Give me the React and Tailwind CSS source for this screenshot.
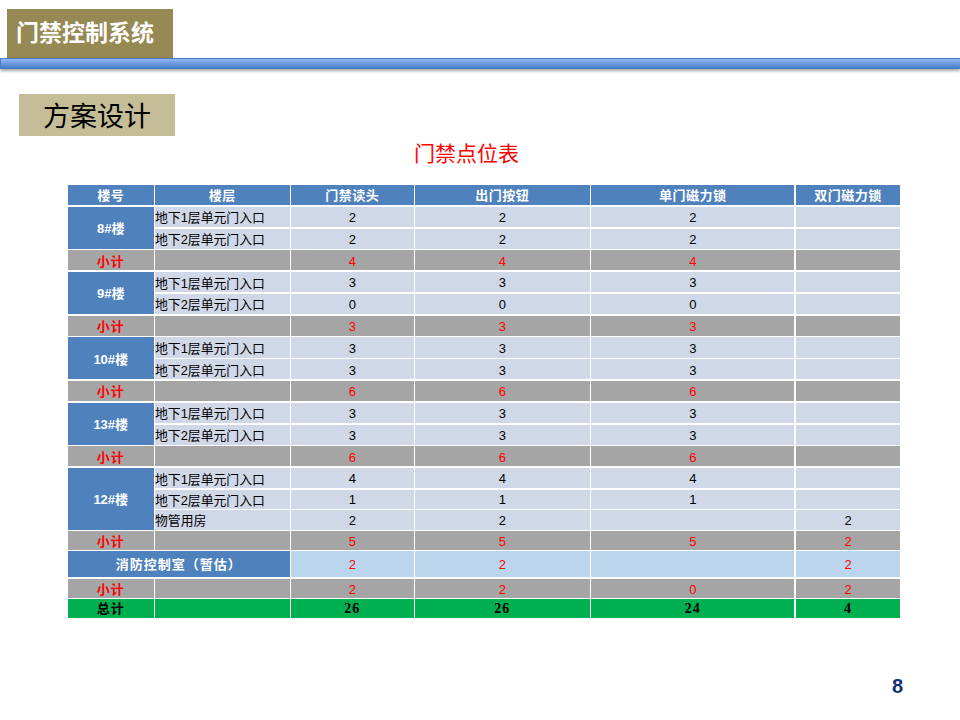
const CJK = '"Liberation Sans","Noto Sans CJK SC",sans-serif';

const blue = "bg-[#4f81bd] text-white font-bold flex items-center justify-center";
const light = "bg-[#d0d8e8] text-black flex items-center justify-center pt-[2px]";
const gray = "bg-[#a5a5a5] text-[#ff0000] flex items-center justify-center pt-[2px]";
const sky = "bg-[#bbd5ed] text-[#ff0000] flex items-center justify-center pt-[2px]";
const green = "bg-[#00b050] text-black font-bold flex items-center justify-center";

function Light({ v }) {
  return <div className={light}>{v}</div>;
}
function Floor({ v }) {
  return <div className="bg-[#d0d8e8] text-black flex items-center justify-start text-[12.85px] pt-[2px]">{v}</div>;
}
function Sub({ v }) {
  return (
    <>
      <div className={gray + " font-bold text-[13px] tracking-[1px]"}>小计</div>
      <div className={gray}></div>
      {v.map((x, i) => (
        <div key={i} className={gray}>{x}</div>
      ))}
    </>
  );
}
function Building({ name, rows, total }) {
  return (
    <>
      <div className={blue + " text-[13px] pt-[2px]"} style={{ gridRow: `span ${rows.length}` }}>{name}</div>
      {rows.map((r, i) => (
        <div key={i} className="contents">
          <Floor v={r[0]} />
          <Light v={r[1]} />
          <Light v={r[2]} />
          <Light v={r[3]} />
          <Light v={r[4]} />
        </div>
      ))}
      <Sub v={total} />
    </>
  );
}

const F1 = "地下1层单元门入口";
const F2 = "地下2层单元门入口";
const head = blue + " text-[13px] tracking-[0.5px] pt-[2px]";
const totalNum = green + " text-[14px] tracking-[1px] [font-family:'Liberation_Serif',serif]";

export default function App() {
  return (
    <div className="w-[960px] h-[720px] bg-white overflow-hidden flex flex-col" style={{ fontFamily: CJK }}>
      <div className="ml-[7px] mt-[9px] w-[166px] h-[49px] bg-[#968953] text-white font-bold text-[23px] flex items-center pl-[9px]">
        门禁控制系统
      </div>
      <div className="h-[11px] border-t border-l border-[#4a7dc4] bg-gradient-to-b from-[#93b8f4] to-[#3f78c2] shadow-[0_2px_3px_rgba(0,0,0,0.35)]"></div>

      <div className="ml-[19px] mt-[25px] w-[156px] h-[42px] bg-[#c4bd97] text-black text-[27px] flex items-center justify-center pt-[5px]">
        方案设计
      </div>

      <div className="mt-[4px] h-[28px] text-[#ff0000] text-[21px] flex items-center pl-[414px]">
        门禁点位表
      </div>

      <div className="ml-[68px] mt-[17px] w-[832px] h-[434px] grid grid-cols-[85.5px_134.5px_122.5px_174.7px_203.3px_1fr] grid-rows-[20.1px_repeat(13,20.1px)_18.6px_19.3px_18.3px_25.9px_19px_18.7px] gap-x-[1.5px] gap-y-[1.7px] text-[13px] bg-white">
        <div className={head}>楼号</div>
        <div className={head}>楼层</div>
        <div className={head}>门禁读头</div>
        <div className={head}>出门按钮</div>
        <div className={head}>单门磁力锁</div>
        <div className={head}>双门磁力锁</div>

        <Building name="8#楼" rows={[[F1, 2, 2, 2, ""], [F2, 2, 2, 2, ""]]} total={[4, 4, 4, ""]} />
        <Building name="9#楼" rows={[[F1, 3, 3, 3, ""], [F2, 0, 0, 0, ""]]} total={[3, 3, 3, ""]} />
        <Building name="10#楼" rows={[[F1, 3, 3, 3, ""], [F2, 3, 3, 3, ""]]} total={[6, 6, 6, ""]} />
        <Building name="13#楼" rows={[[F1, 3, 3, 3, ""], [F2, 3, 3, 3, ""]]} total={[6, 6, 6, ""]} />
        <Building name="12#楼" rows={[[F1, 4, 4, 4, ""], [F2, 1, 1, 1, ""], ["物管用房", 2, 2, "", 2]]} total={[5, 5, 5, 2]} />

        <div className={blue + " col-span-2 text-[13px] tracking-[1px] pt-[2px]"}>消防控制室（暂估）</div>
        <div className={sky}>2</div>
        <div className={sky}>2</div>
        <div className={sky}></div>
        <div className={sky}>2</div>

        <Sub v={[2, 2, 0, 2]} />

        <div className={green + " text-[13px] tracking-[1px]"}>总计</div>
        <div className={green}></div>
        <div className={totalNum}>26</div>
        <div className={totalNum}>26</div>
        <div className={totalNum}>24</div>
        <div className={totalNum}>4</div>
      </div>

      <div className="mt-auto mb-[22px] mr-[57px] text-right text-[#17307a] font-bold text-[20px] leading-[24px]">8</div>
    </div>
  );
}
